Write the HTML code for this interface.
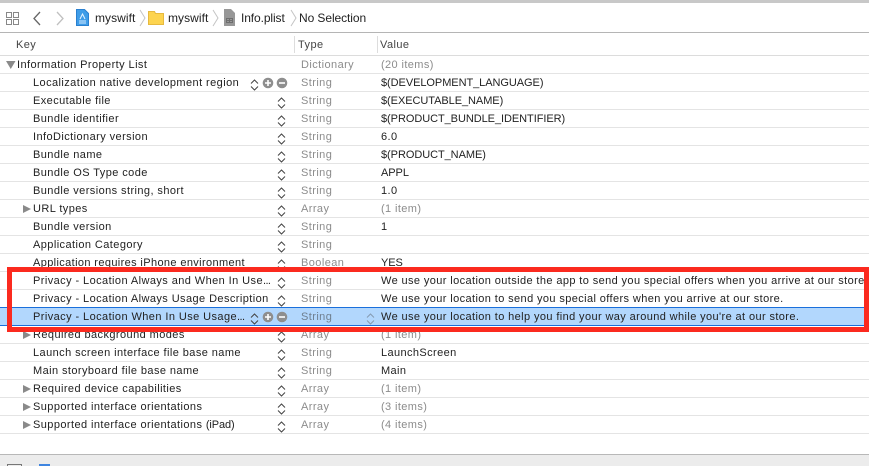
<!DOCTYPE html>
<html><head><meta charset="utf-8"><style>
html,body{margin:0;padding:0;width:869px;height:466px;overflow:hidden;background:#fff}
body{position:relative;font-family:"Liberation Sans",sans-serif;font-size:11px;color:#222;letter-spacing:.42px}
.a{position:absolute;white-space:nowrap}
.r{position:absolute;left:0;width:869px;height:18px;box-sizing:border-box;border-bottom:1px solid #e4e4e4;line-height:19px;white-space:nowrap}
.r span{position:absolute;top:0}
.r span i{font-style:normal}
.k{left:33px}.t{left:301px;color:#8c8c8c}.v{left:381px;letter-spacing:.39px}
.u{letter-spacing:-.06px}
.g{color:#8c8c8c}
.d{letter-spacing:-.6px}
.r svg{position:absolute}
.s{left:277px;top:5px}
.s2{left:250px;top:5px}
.tri{left:23px;top:5px}
.c{left:262px;top:3px}
.h{color:#444;line-height:18px}
.b{font-size:12px;line-height:16px;color:#222;top:10px;letter-spacing:.05px}
</style></head><body>
<svg width="0" height="0" style="position:absolute"><defs>
<symbol id="st" viewBox="0 0 9 12"><path d="M1 4.5 4.5 1 8 4.5M1 7.5 4.5 11 8 7.5" fill="none" stroke="#444" stroke-width="1"/></symbol>
<symbol id="pm" viewBox="0 0 26 12"><circle cx="6" cy="6" r="5.3" fill="#8e8e8e"/><path d="M3 6h6M6 3v6" stroke="#fff" stroke-width="1.6"/><circle cx="20" cy="6" r="5.3" fill="#8e8e8e"/><path d="M17 6h6" stroke="#fff" stroke-width="1.6"/></symbol>
<symbol id="tr" viewBox="0 0 8 8"><path d="M0 0 8 4 0 8Z" fill="#8a8a8a"/></symbol>
</defs></svg>

<div class="a" style="left:0;top:0;width:869px;height:3px;background:#c8c8c8"></div>
<div class="a" style="left:0;top:32px;width:869px;height:1px;background:#b5b5b5"></div>

<svg class="a" style="left:6px;top:12px" width="14" height="14" fill="none" stroke="#888"><path d="M.5.5h5v5h-5zM7.5.5h5v5h-5zM.5 7.5h5v5h-5zM7.5 7.5h5v5h-5z"/></svg>
<svg class="a" style="left:32px;top:11px" width="10" height="15" fill="none" stroke="#666" stroke-width="1.3"><path d="M8 1 2 7.5 8 14"/></svg>
<svg class="a" style="left:55px;top:11px" width="10" height="15" fill="none" stroke="#c0c0c0" stroke-width="1.3"><path d="M2 1 8 7.5 2 14"/></svg>
<svg class="a" style="left:76px;top:9px" width="13" height="17"><path d="M.5.5h8l4 4v12H.5z" fill="#3f9de8" stroke="#2a80d0"/><path d="M3 12h7M3 14h7" stroke="#d4eaff"/><path d="M4 10 6.5 5 9 10" fill="none" stroke="#e8f4ff"/></svg>
<div class="a b" style="left:95px">myswift</div>
<svg class="a" style="left:139px;top:9px" width="7" height="18" fill="none" stroke="#c4c4c4"><path d="M1 1 6 9 1 17"/></svg>
<svg class="a" style="left:148px;top:10px" width="16" height="15"><path d="M.5 1.5h6l1 2h8v11H.5z" fill="#fdd44f" stroke="#e6b93f"/></svg>
<div class="a b" style="left:168px">myswift</div>
<svg class="a" style="left:212px;top:9px" width="7" height="18" fill="none" stroke="#c4c4c4"><path d="M1 1 6 9 1 17"/></svg>
<svg class="a" style="left:224px;top:9px" width="11" height="17"><path d="M0 0h7l4 4v13H0z" fill="#979797"/><path d="M2.5 9.5h6v4h-6zM5.5 9.5v4M2.5 11.5h6" fill="none" stroke="#6e6e6e"/></svg>
<div class="a b" style="left:241px;letter-spacing:-.1px">Info.plist</div>
<svg class="a" style="left:290px;top:9px" width="7" height="18" fill="none" stroke="#c4c4c4"><path d="M1 1 6 9 1 17"/></svg>
<div class="a b" style="left:299px;letter-spacing:-.08px">No Selection</div>

<div class="a h" style="left:16px;top:36px">Key</div>
<div class="a h" style="left:298px;top:36px">Type</div>
<div class="a h" style="left:380px;top:36px">Value</div>
<div class="a" style="left:294px;top:36px;width:1px;height:17px;background:#ddd"></div>
<div class="a" style="left:377px;top:36px;width:1px;height:17px;background:#ddd"></div>
<div class="a" style="left:0;top:55px;width:869px;height:1px;background:#dcdcdc"></div>

<div class="r" style="top:56px"><svg style="left:6px;top:5px" width="10" height="8"><path d="M0 0H9.5L4.75 8Z" fill="#8a8a8a"/></svg><span style="left:17px">Information Property List</span><span class="t">Dictionary</span><span class="v g">(20 items)</span></div>
<div class="r" style="top:74px"><span class="k">Localization native development region</span><svg class="s2" width="9" height="12"><use href="#st"/></svg><svg class="c" width="26" height="12"><use href="#pm"/></svg><span class="t">String</span><span class="v u">$(DEVELOPMENT_LANGUAGE)</span></div>
<div class="r" style="top:92px"><span class="k">Executable file</span><svg class="s" width="9" height="12"><use href="#st"/></svg><span class="t">String</span><span class="v u">$(EXECUTABLE_NAME)</span></div>
<div class="r" style="top:110px"><span class="k">Bundle identifier</span><svg class="s" width="9" height="12"><use href="#st"/></svg><span class="t">String</span><span class="v u">$(PRODUCT_BUNDLE_IDENTIFIER)</span></div>
<div class="r" style="top:128px"><span class="k">InfoDictionary version</span><svg class="s" width="9" height="12"><use href="#st"/></svg><span class="t">String</span><span class="v">6.0</span></div>
<div class="r" style="top:146px"><span class="k">Bundle name</span><svg class="s" width="9" height="12"><use href="#st"/></svg><span class="t">String</span><span class="v u">$(PRODUCT_NAME)</span></div>
<div class="r" style="top:164px"><span class="k">Bundle OS Type code</span><svg class="s" width="9" height="12"><use href="#st"/></svg><span class="t">String</span><span class="v u">APPL</span></div>
<div class="r" style="top:182px"><span class="k">Bundle versions string, short</span><svg class="s" width="9" height="12"><use href="#st"/></svg><span class="t">String</span><span class="v">1.0</span></div>
<div class="r" style="top:200px"><svg class="tri" width="8" height="8"><use href="#tr"/></svg><span class="k">URL types</span><svg class="s" width="9" height="12"><use href="#st"/></svg><span class="t">Array</span><span class="v g">(1 item)</span></div>
<div class="r" style="top:218px"><span class="k">Bundle version</span><svg class="s" width="9" height="12"><use href="#st"/></svg><span class="t">String</span><span class="v">1</span></div>
<div class="r" style="top:236px"><span class="k">Application Category</span><svg class="s" width="9" height="12"><use href="#st"/></svg><span class="t">String</span></div>
<div class="r" style="top:254px"><span class="k" style="letter-spacing:.37px">Application requires iPhone environment</span><svg class="s" width="9" height="12"><use href="#st"/></svg><span class="t">Boolean</span><span class="v u">YES</span></div>
<div class="r" style="top:272px"><span class="k">Privacy - Location Always and When In Use<i class="d">...</i></span><svg class="s" width="9" height="12"><use href="#st"/></svg><span class="t">String</span><span class="v">We use your location outside the app to send you special offers when you arrive at our store</span></div>
<div class="r" style="top:290px"><span class="k">Privacy - Location Always Usage Description</span><svg class="s" width="9" height="12"><use href="#st"/></svg><span class="t">String</span><span class="v">We use your location to send you special offers when you arrive at our store.</span></div>
<div class="r" style="top:307px;height:19px;background:#b2d7fd;border-top:1px solid #1a6fdb;border-bottom:1px solid #1a6fdb"><span class="k">Privacy - Location When In Use Usage<i class="d">...</i></span><svg class="s2" width="9" height="12"><use href="#st"/></svg><svg class="c" width="26" height="12"><use href="#pm"/></svg><span class="t" style="color:#6f7f90">String</span><svg style="left:366px;top:5px;opacity:.4" width="9" height="12"><use href="#st"/></svg><span class="v">We use your location to help you find your way around while you're at our store.</span></div>
<div class="r" style="top:326px"><svg class="tri" width="8" height="8"><use href="#tr"/></svg><span class="k">Required background modes</span><svg class="s" width="9" height="12"><use href="#st"/></svg><span class="t">Array</span><span class="v g">(1 item)</span></div>
<div class="r" style="top:344px"><span class="k">Launch screen interface file base name</span><svg class="s" width="9" height="12"><use href="#st"/></svg><span class="t">String</span><span class="v">LaunchScreen</span></div>
<div class="r" style="top:362px"><span class="k">Main storyboard file base name</span><svg class="s" width="9" height="12"><use href="#st"/></svg><span class="t">String</span><span class="v">Main</span></div>
<div class="r" style="top:380px"><svg class="tri" width="8" height="8"><use href="#tr"/></svg><span class="k">Required device capabilities</span><svg class="s" width="9" height="12"><use href="#st"/></svg><span class="t">Array</span><span class="v g">(1 item)</span></div>
<div class="r" style="top:398px"><svg class="tri" width="8" height="8"><use href="#tr"/></svg><span class="k">Supported interface orientations</span><svg class="s" width="9" height="12"><use href="#st"/></svg><span class="t">Array</span><span class="v g">(3 items)</span></div>
<div class="r" style="top:416px"><svg class="tri" width="8" height="8"><use href="#tr"/></svg><span class="k">Supported interface orientations <i style="letter-spacing:-.1px">(iPad)</i></span><svg class="s" width="9" height="12"><use href="#st"/></svg><span class="t">Array</span><span class="v g">(4 items)</span></div>

<div class="a" style="left:7px;top:267px;width:862px;height:65px;box-sizing:border-box;border:5px solid #fb2a1f"></div>

<div class="a" style="left:0;top:454px;width:869px;height:12px;background:#ececec;border-top:1px solid #b8b8b8"></div>
<div class="a" style="left:7px;top:464px;width:15px;height:2px;border:1px solid #777;border-bottom:0;box-sizing:border-box"></div>
<div class="a" style="left:39px;top:464px;width:11px;height:2px;background:#3f85e0"></div>
</body></html>
